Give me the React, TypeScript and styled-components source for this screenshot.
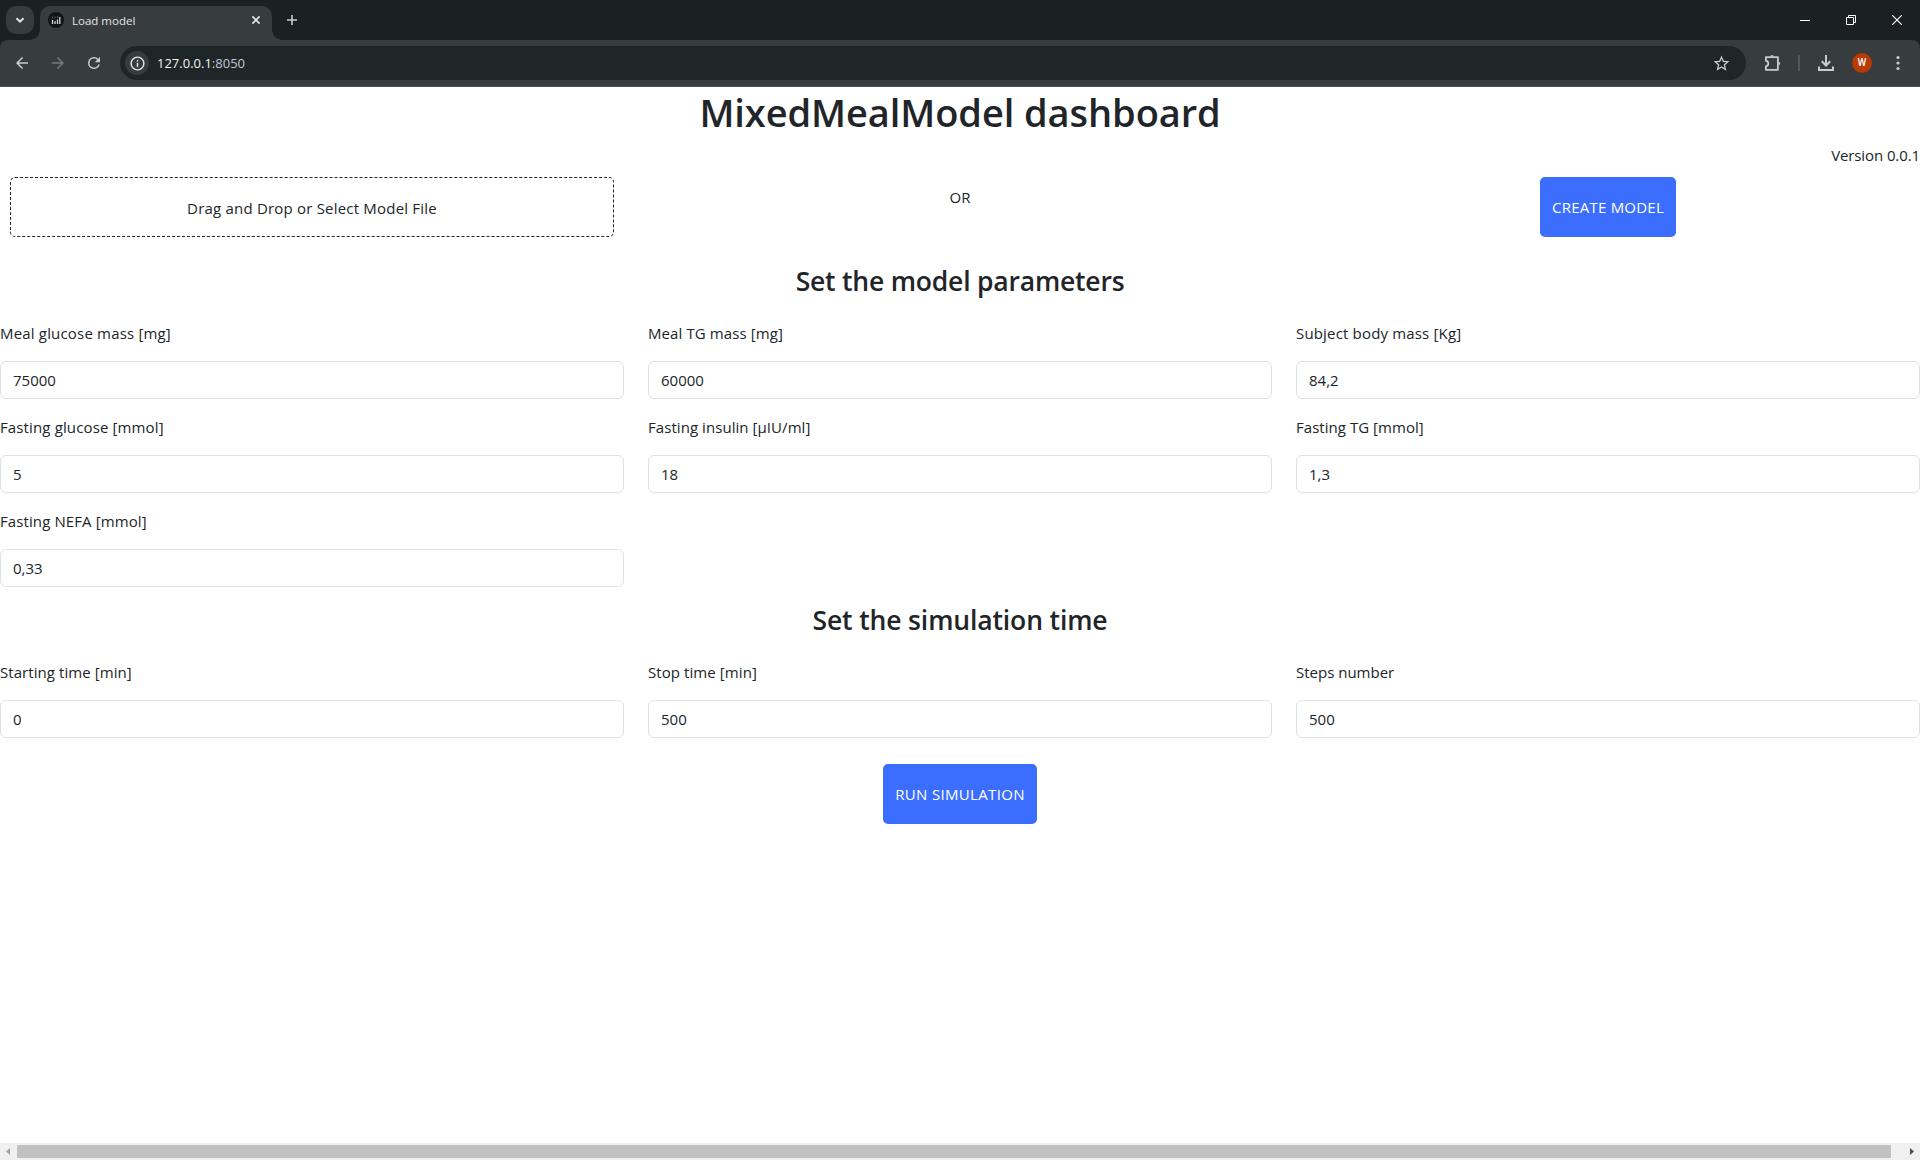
import React from "react";
import styled, { createGlobalStyle } from "styled-components";

const STRIP = "#1b2123";
const BAR = "#373d3e";
const OMNI = "#1f2628";

const Global = createGlobalStyle`
  * { box-sizing: border-box; }
  html, body { margin: 0; padding: 0; background: #fff; overflow: hidden; }
  body { font-family: "Open Sans", "Noto Sans", sans-serif; font-size: 15px; line-height: 24px; color: #212529; }
  h1, h2, p { margin: 0; }
`;

const Window = styled.div`
  display: flex;
  flex-direction: column;
  width: 1920px;
  height: 1160px;
  overflow: hidden;
`;

const TabStrip = styled.div`
  display: flex;
  align-items: flex-start;
  height: 40px;
  padding: 6px 13px 0 6px;
  background: ${STRIP};
`;

const TabSearch = styled.div`
  display: grid;
  place-items: center;
  width: 28px;
  height: 28px;
  border-radius: 10px;
  background: ${BAR};
`;

const Tab = styled.div`
  position: relative;
  display: flex;
  align-items: center;
  width: 232px;
  height: 34px;
  margin-left: 6px;
  padding: 0 11px 6px 8px;
  border-radius: 10px 10px 0 0;
  background: ${BAR};
  color: #e3e5e5;
  font-size: 11.5px;
  &::before, &::after {
    content: "";
    position: absolute;
    bottom: 0;
    width: 10px;
    height: 10px;
  }
  &::before { left: -10px; background: radial-gradient(circle at 0 0, transparent 9.5px, ${BAR} 10px); }
  &::after { right: -10px; background: radial-gradient(circle at 100% 0, transparent 9.5px, ${BAR} 10px); }
`;

const TabTitle = styled.div`
  flex: 1;
  padding: 1px 0 0 8px;
  line-height: 16px;
`;

const NewTab = styled.div`
  display: grid;
  place-items: center;
  width: 28px;
  height: 28px;
  margin-left: 6px;
`;

const WindowButtons = styled.div`
  display: flex;
  gap: 36px;
  margin: 9px 5px 0 auto;
`;

const ToolbarBack = styled.div`
  background: ${STRIP};
`;

const Toolbar = styled.div`
  display: flex;
  align-items: center;
  height: 47px;
  padding: 0 12px 0 13px;
  border-bottom: 1px solid #4d5051;
  border-radius: 8px 8px 0 0;
  background: ${BAR};
`;

const NavIcons = styled.div`
  display: flex;
  gap: 18px;
  width: 107px;
`;

const Omnibox = styled.div`
  display: flex;
  align-items: center;
  width: 1626px;
  height: 34px;
  padding: 0 15px 0 5px;
  border-radius: 17px;
  background: ${OMNI};
`;

const SiteInfo = styled.div`
  display: grid;
  place-items: center;
  width: 24px;
  height: 24px;
  border-radius: 50%;
  background: ${BAR};
`;

const Url = styled.div`
  flex: 1;
  padding-left: 8px;
  color: #c3c8ca;
  font-size: 13px;
  line-height: 20px;
`;

const Host = styled.span`
  color: #f1f3f3;
`;

const ToolIcons = styled.div`
  display: flex;
  align-items: center;
  flex: 1;
  padding-left: 17px;
`;

const Divider = styled.div`
  width: 2px;
  height: 16px;
  margin: 0 17px 0 15px;
  background: #50595b;
`;

const Avatar = styled.div`
  display: grid;
  place-items: center;
  width: 20px;
  height: 20px;
  margin: 0 24px 0 17px;
  border-radius: 50%;
  background: #b83a05;
  color: #fff;
  font: 500 10px/20px Roboto, sans-serif;
`;

const Page = styled.main`
  display: flex;
  flex-direction: column;
  flex: 1;
`;

const Title = styled.h1`
  height: 48px;
  padding-top: 1px;
  font-size: 38px;
  font-weight: 600;
  line-height: 48px;
  text-align: center;
`;

const Version = styled.p`
  padding-top: 8px;
  text-align: right;
`;

const Columns = styled.div<{ $top?: number }>`
  display: grid;
  grid-template-columns: repeat(3, 624px);
  column-gap: 24px;
  row-gap: 16px;
  margin-top: ${(p) => p.$top ?? 0}px;
`;

const Upload = styled.div`
  height: 60px;
  margin: 0 10px;
  border: 1px dashed #212529;
  border-radius: 5px;
  line-height: 60px;
  text-align: center;
`;

const Or = styled.p`
  padding-top: 8px;
  text-align: center;
`;

const ButtonCell = styled.div`
  display: flex;
  justify-content: center;
`;

const Button = styled.button<{ $width: number }>`
  width: ${(p) => p.$width}px;
  height: 60px;
  padding: 0 0 1px;
  border: 0;
  border-radius: 5px;
  background: #3b6eff;
  color: #fff;
  font: inherit;
  white-space: nowrap;
`;

const Heading = styled.h2<{ $top: number }>`
  height: 34px;
  margin-top: ${(p) => p.$top}px;
  font-size: 26.5px;
  font-weight: 600;
  line-height: 34px;
  text-align: center;
`;

const Field = styled.label`
  display: flex;
  flex-direction: column;
  gap: 16px;
`;

const Input = styled.div`
  height: 38px;
  padding: 6px 12px;
  border: 1px solid #dee2e6;
  border-radius: 6px;
`;

const Text = styled.span<{ $track?: number }>`
  letter-spacing: ${(p) => p.$track ?? 0}px;
  white-space: nowrap;
`;

const ButtonRow = styled.div`
  display: flex;
  justify-content: center;
  margin-top: 26px;
`;

const ScrollBar = styled.div`
  display: flex;
  align-items: center;
  justify-content: space-between;
  height: 17px;
  padding: 0 6px;
  background: #f0f0f0;
`;

const Thumb = styled.div`
  width: 1874px;
  height: 13px;
  margin-right: auto;
  margin-left: 7px;
  background: #c1c1c1;
`;

type IconProps = { d: string; size: number; color?: string };
const Icon = ({ d, size, color = "#c7cccd" }: IconProps) => (
  <svg width={size} height={size} viewBox="0 0 24 24" fill={color}>
    <path d={d} />
  </svg>
);

const icons = {
  back: "M20 11H7.83l5.59-5.59L12 4l-8 8 8 8 1.41-1.41L7.83 13H20v-2z",
  forward: "M12 4l-1.41 1.41L16.17 11H4v2h12.17l-5.58 5.59L12 20l8-8z",
  reload:
    "M17.65 6.35A7.95 7.95 0 0 0 12 4a8 8 0 1 0 7.73 10h-2.08A6 6 0 1 1 12 6c1.66 0 3.14.69 4.22 1.78L13 11h7V4l-2.35 2.35z",
  info: "M11 7h2v2h-2zm0 4h2v6h-2zm1-9a10 10 0 1 0 0 20 10 10 0 0 0 0-20zm0 18a8 8 0 1 1 0-16 8 8 0 0 1 0 16z",
  star: "M22 9.24l-7.19-.62L12 2 9.19 8.63 2 9.24l5.46 4.73L5.82 21 12 17.27 18.18 21l-1.63-7.03L22 9.24zM12 15.4l-3.76 2.27 1-4.28-3.32-2.88 4.38-.38L12 6.1l1.71 4.04 4.38.38-3.32 2.88 1 4.28L12 15.4z",
};

const modelFields: [string, string, number][] = [
  ["Meal glucose mass [mg]", "75000", 0.18],
  ["Meal TG mass [mg]", "60000", 0.1],
  ["Subject body mass [Kg]", "84,2", 0.17],
  ["Fasting glucose [mmol]", "5", 0.13],
  ["Fasting insulin [µIU/ml]", "18", 0.06],
  ["Fasting TG [mmol]", "1,3", 0.04],
  ["Fasting NEFA [mmol]", "0,33", 0.1],
];

const timeFields: [string, string, number][] = [
  ["Starting time [min]", "0", 0.07],
  ["Stop time [min]", "500", 0.08],
  ["Steps number", "500", 0],
];

const Fields = ({ items, top }: { items: [string, string, number][]; top: number }) => (
  <Columns $top={top}>
    {items.map(([label, value, track]) => (
      <Field key={label}>
        <Text $track={track}>{label}</Text>
        <Input><Text>{value}</Text></Input>
      </Field>
    ))}
  </Columns>
);

export default function App() {
  return (
    <Window>
      <Global />
      <TabStrip>
        <TabSearch>
          <svg width="10" height="10" viewBox="0 0 10 10" fill="none" stroke="#e3e5e5" strokeWidth="2">
            <path d="M1.5 3.2 5 6.7l3.5-3.5" />
          </svg>
        </TabSearch>
        <Tab>
          <svg width="16" height="16" viewBox="0 0 16 16">
            <circle cx="8" cy="8" r="8" fill="#111517" />
            <path d="M4.5 8v4M7 9v3M9.500 7.500v4.500M11.800 5v7" stroke="#d5d8d9" strokeWidth="1.300" />
            <path d="M4.500 4.500v2M7 4.500v2" stroke="#8a3a55" strokeWidth="1.200" />
            <path d="M9.500 4.300v1.500" stroke="#4d6f9e" strokeWidth="1.200" />
          </svg>
          <TabTitle><Text>Load model</Text></TabTitle>
          <svg width="10" height="10" viewBox="0 0 10 10" stroke="#e3e5e5" strokeWidth="1.600">
            <path d="M1.400 1.400l7.200 7.200M8.600 1.400l-7.200 7.200" />
          </svg>
        </Tab>
        <NewTab>
          <svg width="12" height="12" viewBox="0 0 12 12" stroke="#c7cccd" strokeWidth="1.600">
            <path d="M6 1v10M1 6h10" />
          </svg>
        </NewTab>
        <WindowButtons>
          <svg width="10" height="10" viewBox="0 0 10 10"><path d="M0 5h10v1H0z" fill="#fff" /></svg>
          <svg width="10" height="10" viewBox="0 0 10 10" fill="none" stroke="#fff">
            <path d="M.5 2.500h7v7h-7zM2.500 2.500v-2h7v7h-2" />
          </svg>
          <svg width="10" height="10" viewBox="0 0 10 10" stroke="#fff" strokeWidth="1.100"><path d="M0 0l10 10M10 0L0 10" /></svg>
        </WindowButtons>
      </TabStrip>
      <ToolbarBack>
        <Toolbar>
          <NavIcons>
            <Icon d={icons.back} size={18} />
            <Icon d={icons.forward} size={18} color="#747a7b" />
            <Icon d={icons.reload} size={18} />
          </NavIcons>
          <Omnibox>
            <SiteInfo><Icon d={icons.info} size={17} color="#e3e5e5" /></SiteInfo>
            <Url><Host><Text>127.0.0.1</Text></Host><Text>:8050</Text></Url>
            <Icon d={icons.star} size={19} />
          </Omnibox>
          <ToolIcons>
            <svg width="20" height="20" viewBox="0 0 20 20" fill="none" stroke="#c7cccd" strokeWidth="1.800" strokeLinejoin="round">
              <path d="M2.900 4.200h12v12.600h-12v-3.500c3.200-.4 3.200-5 0-5.400z" />
              <path d="M7.300 3.600a1.700 1.700 0 0 1 3.400 0zM15.500 8.700a1.700 1.700 0 0 1 0 3.400z" fill="#c7cccd" stroke="none" />
            </svg>
            <Divider />
            <svg width="18" height="18" viewBox="0 0 18 18" fill="none" stroke="#c7cccd" strokeWidth="2">
              <path d="M9 1v10M4.800 7.300L9 11.500l4.200-4.200M2 12.500V16h14v-3.500" />
            </svg>
            <Avatar>W</Avatar>
            <svg width="4" height="16" viewBox="0 0 4 16" fill="#c7cccd">
              <circle cx="2" cy="2.500" r="1.600" /><circle cx="2" cy="8" r="1.600" /><circle cx="2" cy="13.500" r="1.600" />
            </svg>
          </ToolIcons>
        </Toolbar>
      </ToolbarBack>
      <Page>
        <Title><Text $track={-0.08}>MixedMealModel dashboard</Text></Title>
        <Version><Text $track={-0.1}>Version 0.0.1</Text></Version>
        <Columns $top={10}>
          <Upload><Text $track={0.2}>Drag and Drop or Select Model File</Text></Upload>
          <Or><Text>OR</Text></Or>
          <ButtonCell><Button $width={136}><Text $track={0.23}>CREATE MODEL</Text></Button></ButtonCell>
        </Columns>
        <Heading $top={27}><Text $track={-0.2}>Set the model parameters</Text></Heading>
        <Fields items={modelFields} top={23} />
        <Heading $top={16}><Text $track={-0.13}>Set the simulation time</Text></Heading>
        <Fields items={timeFields} top={23} />
        <ButtonRow><Button $width={154}><Text $track={0.34}>RUN SIMULATION</Text></Button></ButtonRow>
      </Page>
      <ScrollBar>
        <svg width="4" height="7" viewBox="0 0 4 7"><path d="M4 0v7L0 3.500z" fill="#a3a3a3" /></svg>
        <Thumb />
        <svg width="4" height="7" viewBox="0 0 4 7"><path d="M0 0v7l4-3.500z" fill="#505050" /></svg>
      </ScrollBar>
    </Window>
  );
}
